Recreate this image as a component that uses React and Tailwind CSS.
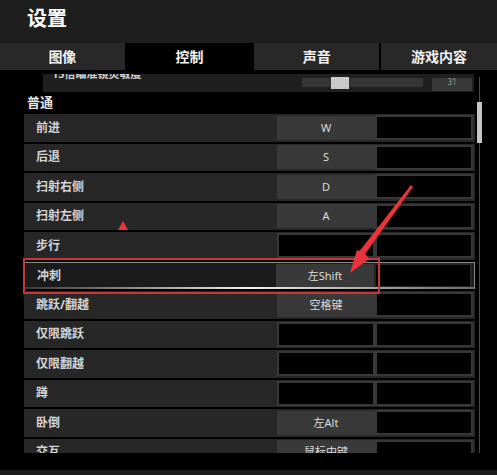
import React from 'react'

const rows = [
  { label: '前进', key: 'W' },
  { label: '后退', key: 'S' },
  { label: '扫射右侧', key: 'D' },
  { label: '扫射左侧', key: 'A' },
  { label: '步行' },
  { label: '冲刺', key: '左Shift', active: true },
  { label: '跳跃/翻越', key: '空格键' },
  { label: '仅限跳跃' },
  { label: '仅限翻越' },
  { label: '蹲' },
  { label: '卧倒', key: '左Alt' },
  { label: '交互', key: '鼠标中键' },
]

const tabs = [
  { name: '图像', w: 'w-[125px]' },
  { name: '控制', w: 'w-[128px]', active: true },
  { name: '声音', w: 'w-[125px]' },
  { name: '游戏内容', w: 'w-[116px]' },
]

function KeyCell({ value, active }) {
  if (value) {
    return (
      <div className="w-[98px] h-[24px] bg-[#393939] flex items-center justify-center text-[11px] text-[#dcdcdc]">
        {value}
      </div>
    )
  }
  return (
    <div
      className={
        'w-[98px] h-[25px] bg-black border-2 ' +
        (active ? 'border-[#262626]' : 'border-[#383838]')
      }
    />
  )
}

function BindRow({ label, keyName, active }) {
  return (
    <div
      className={
        'relative h-[27.5px] flex items-center pr-[2px] ' +
        (active ? 'bg-[#1b1b1b] border border-b-0 border-[#8a8a8a]' : 'bg-[#272727]')
      }
    >
      <div className="flex-1 pl-[12px] text-[12px] font-bold text-[#d4d4d4]">{label}</div>
      <KeyCell value={keyName} active={active} />
      <KeyCell active={active} />
      {active && (
        <div className="absolute left-0 right-0 bottom-0 h-[2px] bg-linear-to-r from-[#3a3a3a] via-[#f2f2f2] to-[#6a6a6a]" />
      )}
    </div>
  )
}

export default function App() {
  return (
    <div className="relative w-[497px] h-[475px] bg-black overflow-hidden font-['Noto_Sans','Noto_Sans_CJK_SC',sans-serif]">
      <header className="h-[43px] bg-[#1e1e1e] pl-[27px] pt-[5px]">
        <h1 className="text-[20px] font-bold text-white leading-[28px]">设置</h1>
      </header>

      <nav className="flex h-[27px] gap-[1px] bg-black">
        {tabs.map((t, i) => (
          <div
            key={t.name}
            className={
              t.w +
              ' flex items-center justify-center text-[14px] font-bold text-[#f2f2f2] ' +
              (t.active ? 'bg-black' : 'bg-[#282828]') +
              (i === 2 ? ' mr-[1px]' : '')
            }
          >
            {t.name}
          </div>
        ))}
      </nav>

      <div className="flex h-[400px] pt-[4px]">
        <div className="w-[475px] h-[379px] overflow-hidden pl-[24px]">
          <div className="-mt-[10px]">
            <div className="ml-[19px] w-[431px] h-[28px] bg-[#1f1f1f] flex items-start">
              <div className="flex-1 pl-[9px] pt-[4px] text-[11px] leading-[11px] font-bold text-[#cfcfcf]">
                15倍瞄准镜灵敏度
              </div>
              <div className="mt-[14px] w-[121px] h-[9px] bg-[#353535] relative">
                <div className="absolute left-[29px] -top-[1px] w-[18px] h-[12px] bg-[#c9c9c9]" />
              </div>
              <div className="ml-[9px] mr-[2px] mt-[14px] w-[40px] h-[13px] bg-[#383838] flex justify-center text-[8px] leading-[8px] text-[#9a9a9a]">
                31
              </div>
            </div>

            <div className="h-[22px] pl-[3px] flex items-center text-[13px] font-bold text-[#e6e6e6]">
              普通
            </div>

            <div className="flex flex-col gap-[2px]">
              {rows.map((r) => (
                <BindRow key={r.label} label={r.label} keyName={r.key} active={r.active} />
              ))}
            </div>
          </div>
        </div>

        <div className="w-[22px] pl-[2px] pt-[3px]">
          <div className="relative w-[5px] h-[376px] flex justify-center">
            <div className="w-[1px] h-full bg-[#4a4a4a]" />
            <div className="absolute left-0 top-[25px] w-[5px] h-[41px] bg-[#c6c6c6]" />
          </div>
        </div>
      </div>

      <div className="h-[5px] bg-[#1b1b1b]" />

      <div className="absolute left-[23px] top-[258px] w-[357px] h-[36px] border-2 border-[#c8363b] pointer-events-none" />

      <svg className="absolute left-0 top-0 pointer-events-none" width="497" height="475" viewBox="0 0 497 475">
        <polygon points="411,185 413,187 363,257 358,253" fill="#e8343a" />
        <polygon points="350,273 357,250 364.5,252.7 369,259" fill="#e8343a" />
        <polygon points="123,221 118,230 128,230" fill="#e8343a" />
      </svg>
    </div>
  )
}
